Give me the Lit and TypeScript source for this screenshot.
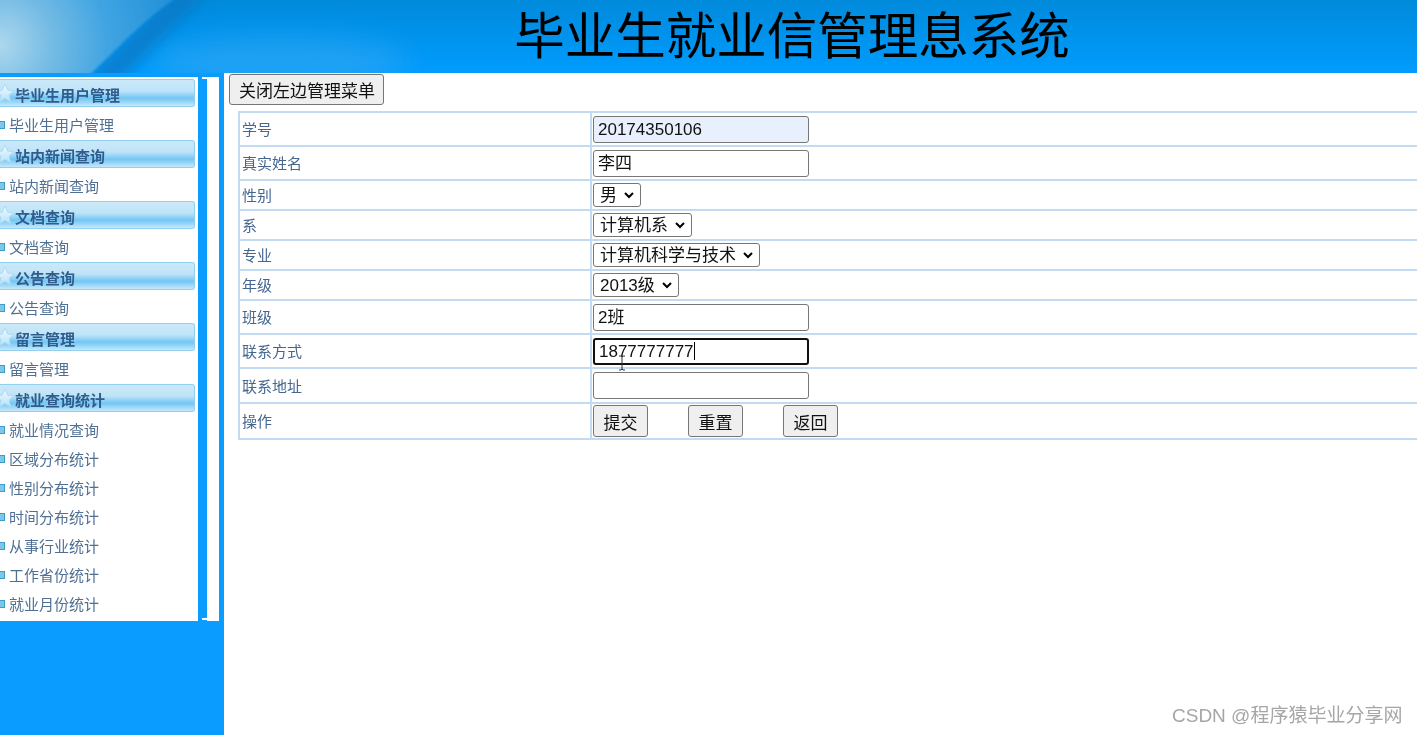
import { LitElement, html, css, svg } from "lit";
import { customElement } from "lit/decorators.js";

const groups: { title: string; items: string[] }[] = [
  { title: "毕业生用户管理", items: ["毕业生用户管理"] },
  { title: "站内新闻查询", items: ["站内新闻查询"] },
  { title: "文档查询", items: ["文档查询"] },
  { title: "公告查询", items: ["公告查询"] },
  { title: "留言管理", items: ["留言管理"] },
  { title: "就业查询统计", items: ["就业情况查询", "区域分布统计", "性别分布统计", "时间分布统计", "从事行业统计", "工作省份统计", "就业月份统计"] },
];

@customElement("app-root")
export class AppRoot extends LitElement {
  static styles = css`
    :host {
      display: block;
      width: 1417px;
      height: 735px;
      overflow: hidden;
      position: relative;
      background: #fff;
      font-family: "Liberation Sans", "Noto Sans CJK SC", sans-serif;
      filter: blur(0.3px);
    }
    .header {
      height: 73px;
      position: relative;
      overflow: hidden;
      background: linear-gradient(180deg, #008adb 0%, #009cff 100%);
      display: flex;
      justify-content: center;
      align-items: center;
    }
    .header svg { position: absolute; left: 0; top: 0; }
    .title {
      position: relative;
      margin: 0 0 0 167px;
      font-size: 50.5px;
      font-weight: 400;
      line-height: 73px;
      color: #000;
      white-space: nowrap;
    }
    .body { display: flex; height: 662px; }
    .side {
      width: 224px;
      flex: none;
      background: #0a9dff;
      padding-top: 4px;
      box-sizing: border-box;
      display: flex;
      align-items: flex-start;
    }
    .menu {
      width: 198px;
      height: 544px;
      flex: none;
      background: #fff;
      box-sizing: border-box;
      padding-top: 2px;
    }
    .bar {
      width: 195px;
      height: 28px;
      box-sizing: border-box;
      border: 1px solid #93cff0;
      border-left: none;
      border-radius: 0 3px 3px 0;
      background: linear-gradient(180deg, #cbe9f9 0%, #bee4f8 42%, #72c6f5 70%, #c5e8fa 100%);
      display: flex;
      align-items: center;
      padding: 2px 0 0 15px;
      font-size: 15px;
      font-weight: 700;
      color: #2f5c8c;
      position: relative;
      white-space: nowrap;
    }
    .bar svg { position: absolute; left: -5px; top: 3px; }
    .items { padding: 3px 0 1px; }
    .item {
      height: 29px;
      display: flex;
      align-items: center;
      font-size: 15px;
      color: #4f6f93;
      white-space: nowrap;
      padding-left: 9px;
      position: relative;
    }
    .item::before {
      content: "";
      position: absolute;
      left: -2px;
      top: 11px;
      width: 7px;
      height: 8px;
      box-sizing: border-box;
      background: #7cc8e6;
      border: 1px solid #3f9cc6;
    }
    .split {
      margin-left: 9px;
      width: 12px;
      height: 544px;
      background: #fff;
      flex: none;
      position: relative;
    }
    .split::before, .split::after {
      content: "";
      position: absolute;
      left: -5px;
      width: 5px;
      height: 2px;
      background: #fff;
    }
    .split::before { top: 0; }
    .split::after { bottom: 1px; }
    .main { flex: 1; min-width: 0; overflow: hidden; padding: 1px 0 0 5px; }
    button, .input, select {
      font-family: "Liberation Sans", "Noto Sans CJK SC", sans-serif;
      font-size: 17px;
      color: #111;
    }
    button {
      display: block;
      height: 31px;
      padding: 0 9px;
      background: #efefef;
      border: 1px solid #767676;
      border-radius: 3px;
      white-space: nowrap;
    }
    .close { width: 155px; }
    table {
      border-collapse: collapse;
      margin: 6px 0 0 9px;
      width: 1300px;
      table-layout: fixed;
      border: 2px solid #c3daf3;
    }
    td {
      border: 2px solid #c3daf3;
      padding: 0 2px;
      font-size: 15px;
      color: #45678f;
      box-sizing: border-box;
    }
    td.label { width: 352px; }
    td.name { padding-bottom: 1px; }
    tr { height: 30px; }
    tr.tall { height: 34px; }
    tr.addr { height: 35px; }
    tr.ops { height: 36px; }
    .input {
      display: block;
      width: 216px;
      height: 27px;
      margin-left: -1px;
      box-sizing: border-box;
      padding: 0 4px;
      line-height: 25px;
      border: 1px solid #767676;
      border-radius: 3px;
      background: #fff;
      position: relative;
      white-space: nowrap;
    }
    .filled { background: #e8f0fe; }
    .focused { border: 2px solid #101010; padding: 0 3px 0 4px; line-height: 23px; }
    .caret {
      display: inline-block;
      width: 1px;
      height: 18px;
      background: #000;
      vertical-align: -3px;
    }
    .beam { position: absolute; left: 23px; top: 15px; }
    .pick { display: block; position: relative; margin-left: -1px; height: 24px; }
    select {
      display: block;
      height: 24px;
      padding: 0 0 0 6px;
      appearance: none;
      -webkit-appearance: none;
      background: #fff;
      border: 1px solid #767676;
      border-radius: 3px;
    }
    .pick svg { position: absolute; top: 9px; pointer-events: none; }
    .s1 { width: 48px; }
    .s1 + svg { left: 31px; }
    .s2 { width: 99px; }
    .s2 + svg { left: 82px; }
    .s3 { width: 167px; }
    .s3 + svg { left: 150px; }
    .s4 { width: 86px; }
    .s4 + svg { left: 69px; }
    .ops-cell { display: flex; margin-left: -1px; }
    .ops-cell button { width: 55px; height: 32px; padding: 0; }
    .ops-cell button + button { margin-left: 40px; }
    .mark {
      position: absolute;
      left: 1172px;
      top: 704px;
      font-size: 19px;
      line-height: 24px;
      color: #a6a6a6;
      white-space: nowrap;
    }
  `;

  private star() {
    return html`<svg width="20" height="20" viewBox="0 0 18 18"><defs><linearGradient id="st" x1="0" y1="0" x2="0" y2="1"><stop offset="0" stop-color="#f4fbff"/><stop offset="1" stop-color="#b4e1f8"/></linearGradient></defs><path d="M9 1l2.4 5.4 5.6.6-4.2 3.9 1.2 5.9L9 14l-5 2.8 1.2-5.9L1 7l5.6-.6z" fill="url(#st)" stroke="#a8d9f3" stroke-width=".8"/></svg>`;
  }

  private headerArt() {
    return svg`
      <defs>
        <radialGradient id="pale" gradientUnits="userSpaceOnUse" cx="0" cy="45" r="175">
          <stop offset="0" stop-color="#aed8ed"/>
          <stop offset="0.3" stop-color="#74bbe4"/>
          <stop offset="0.62" stop-color="#40a4e2"/>
          <stop offset="1" stop-color="#2391da"/>
        </radialGradient>
        <filter id="soft" x="-30%" y="-30%" width="160%" height="160%"><feGaussianBlur stdDeviation="7"/></filter>
        <filter id="softer" x="-30%" y="-60%" width="160%" height="220%"><feGaussianBlur stdDeviation="14"/></filter>
        <filter id="edge" x="-5%" y="-5%" width="110%" height="110%"><feGaussianBlur stdDeviation="1.2"/></filter>
      </defs>
      <ellipse cx="280" cy="62" rx="130" ry="24" fill="#2fa6f0" opacity=".7" filter="url(#softer)"/>
      <path d="M178 -10 L212 -10 C185 15 150 50 120 83 L80 83Z" fill="#0a76c0" opacity=".7" filter="url(#soft)"/>
      <path d="M180 -5 C140 22 115 52 86 78 L-5 78 L-5 -5Z" fill="url(#pale)" filter="url(#edge)"/>`;
  }

  private pick(cls: string, label: string) {
    return html`<div class="pick"><select class=${cls}><option>${label}</option></select><svg width="10" height="7" viewBox="0 0 10 7"><path d="M1 1l4 4 4-4" fill="none" stroke="#000" stroke-width="2"/></svg></div>`;
  }

  render() {
    return html`
      <div class="header">
        <svg width="500" height="73" viewBox="0 0 500 73">${this.headerArt()}</svg>
        <h1 class="title">毕业生就业信管理息系统</h1>
      </div>
      <div class="body">
        <div class="side">
          <div class="menu">
            ${groups.map(g => html`
              <div class="bar">${this.star()}${g.title}</div>
              <div class="items">${g.items.map(i => html`<div class="item">${i}</div>`)}</div>`)}
          </div>
          <div class="split"></div>
        </div>
        <div class="main">
          <button class="close">关闭左边管理菜单</button>
          <table>
            <tr class="tall"><td class="label name">学号</td><td><div class="input filled">20174350106</div></td></tr>
            <tr class="tall"><td class="name">真实姓名</td><td><div class="input">李四</div></td></tr>
            <tr><td class="name">性别</td><td>${this.pick("s1", "男")}</td></tr>
            <tr><td class="name">系</td><td>${this.pick("s2", "计算机系")}</td></tr>
            <tr><td class="name">专业</td><td>${this.pick("s3", "计算机科学与技术")}</td></tr>
            <tr><td class="name">年级</td><td>${this.pick("s4", "2013级")}</td></tr>
            <tr class="tall"><td class="name">班级</td><td><div class="input">2班</div></td></tr>
            <tr class="tall"><td class="name">联系方式</td><td><div class="input focused">1877777777<span class="caret"></span>
              <svg class="beam" width="8" height="16" viewBox="0 0 8 16"><path d="M1 1h2l1 1 1-1h2M4 2v12M1 15h2l1-1 1 1h2" fill="none" stroke="#333" stroke-width="1"/></svg></div></td></tr>
            <tr class="addr"><td class="name">联系地址</td><td><div class="input"></div></td></tr>
            <tr class="ops"><td class="name">操作</td><td><div class="ops-cell"><button>提交</button><button>重置</button><button>返回</button></div></td></tr>
          </table>
        </div>
      </div>
      <div class="mark">CSDN @程序猿毕业分享网</div>
    `;
  }
}
